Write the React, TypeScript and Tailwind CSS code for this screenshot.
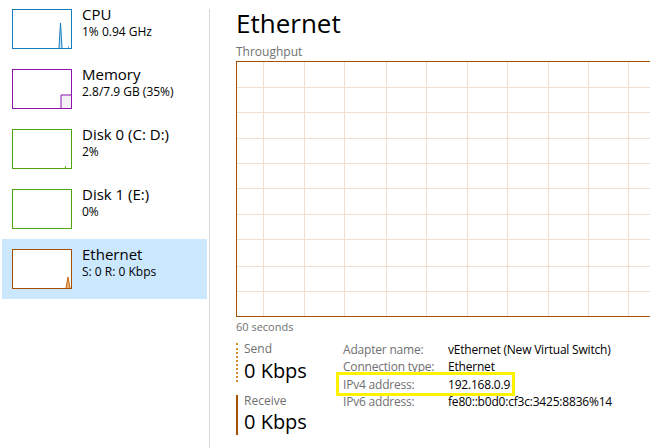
import { ReactNode } from 'react';

type Item = {
  name: string;
  detail: string;
  color: string;
  selected?: boolean;
  graph: ReactNode;
};

const items: Item[] = [
  {
    name: 'CPU',
    detail: '1% 0.94 GHz',
    color: 'border-[#117dbb]',
    graph: (
      <svg width="58" height="38" className="block">
        <polygon points="46,38 47.5,13 49,38" fill="#cfe4f3" />
        <polyline points="46,38 47.5,13 49,38" fill="none" stroke="#117dbb" strokeWidth="1" />
        <rect x="55" y="36" width="1" height="2" fill="#7fb6d9" />
      </svg>
    ),
  },
  {
    name: 'Memory',
    detail: '2.8/7.9 GB (35%)',
    color: 'border-[#8b12ae]',
    graph: (
      <svg width="58" height="38" className="block">
        <rect x="48" y="25" width="10" height="13" fill="#f4f0f5" />
        <polyline points="48,38 48,25 58,25" fill="none" stroke="#8b12ae" strokeWidth="1" />
      </svg>
    ),
  },
  {
    name: 'Disk 0 (C: D:)',
    detail: '2%',
    color: 'border-[#4da60c]',
    graph: (
      <svg width="58" height="38" className="block">
        <rect x="52" y="36" width="1" height="2" fill="#4da60c" />
      </svg>
    ),
  },
  {
    name: 'Disk 1 (E:)',
    detail: '0%',
    color: 'border-[#4da60c]',
    graph: <svg width="58" height="38" className="block" />,
  },
  {
    name: 'Ethernet',
    detail: 'S: 0 R: 0 Kbps',
    color: 'border-[#a74f01]',
    selected: true,
    graph: (
      <svg width="58" height="38" className="block">
        <polygon points="53,38 55,27 57,38" fill="#e9b27a" />
        <polyline points="53,38 55,27 57,38" fill="none" stroke="#c46a12" strokeWidth="1" />
      </svg>
    ),
  },
];

const details = [
  ['Adapter name:', 'vEthernet (New Virtual Switch)'],
  ['Connection type:', 'Ethernet'],
  ['IPv4 address:', '192.168.0.9'],
  ['IPv6 address:', 'fe80::b0d0:cf3c:3425:8836%14'],
];

function Throughput() {
  const cols = [27, 68, 108, 150, 190, 231, 271, 312, 352, 392, 433];
  const rows = [26, 51, 77, 102, 127, 153, 178, 205, 230];
  return (
    <div className="w-[440px] h-[256px] border border-[#a74f01] bg-white">
      <svg width="438" height="254" className="block">
        {cols.map((x) => (
          <line key={x} x1={x - 0.5} y1="0" x2={x - 0.5} y2="254" stroke="#f0dfcf" strokeWidth="1" />
        ))}
        {rows.map((y) => (
          <line key={y} x1="0" y1={y - 0.5} x2="438" y2={y - 0.5} stroke="#f0dfcf" strokeWidth="1" />
        ))}
      </svg>
    </div>
  );
}

export default function App() {
  return (
    <div className="flex w-[650px] h-[448px] overflow-hidden bg-white text-black font-['Segoe_UI','Open_Sans',sans-serif]">
      <div className="w-[209px] shrink-0 -mt-px">
        {items.map((item) => (
          <div
            key={item.name}
            className={`flex h-[60px] mx-[2px] pl-[10px] pt-[10px] gap-[10px] ${item.selected ? 'bg-[#cce8ff]' : ''}`}
          >
            <div className={`w-[60px] h-[40px] border bg-white ${item.color}`}>{item.graph}</div>
            <div className="flex flex-col -mt-[5px]">
              <span className="text-[15px] leading-[20px]">{item.name}</span>
              <span className="text-[12px] leading-[15px]">{item.detail}</span>
            </div>
          </div>
        ))}
      </div>
      <div className="w-px mt-[9px] bg-[#d9d9d9] shrink-0" />
      <div className="pl-[26px] flex flex-col">
        <h1 className="text-[26px] leading-[36px] mt-[5px]">Ethernet</h1>
        <div className="text-[12px] leading-[16px] text-[#707070] mt-[3px]">Throughput</div>
        <div className="mt-px">
          <Throughput />
        </div>
        <div className="text-[11px] leading-[14px] text-[#707070] mt-[3px]">60 seconds</div>
        <div className="flex mt-[9px]">
          <div className="flex flex-col gap-[13px] w-[100px] shrink-0">
            <div className="border-l-2 border-dotted border-[#d98c2b] pl-[6px] h-[39px]">
              <div className="text-[12px] leading-[12px] text-[#707070]">Send</div>
              <div className="text-[20px] leading-[24px] mt-[4px]">0 Kbps</div>
            </div>
            <div className="border-l-2 border-[#a74f01] pl-[6px] h-[40px]">
              <div className="text-[12px] leading-[12px] text-[#707070]">Receive</div>
              <div className="text-[20px] leading-[24px] mt-[3px]">0 Kbps</div>
            </div>
          </div>
          <div className="flex flex-col ml-[7px] -mt-[2px] tracking-[-0.2px]">
            {details.map(([label, value]) => (
              <div key={label} className="relative flex h-[17.3px] text-[12px] leading-[17px]">
                {label === 'IPv4 address:' && (
                  <div className="absolute -top-[4px] -left-[7px] w-[179px] h-[24px] border-[3px] border-[#fff200]" />
                )}
                <span className="w-[105px] shrink-0 text-[#707070]">{label}</span>
                <span className="whitespace-nowrap">{value}</span>
              </div>
            ))}
          </div>
        </div>
      </div>
    </div>
  );
}
